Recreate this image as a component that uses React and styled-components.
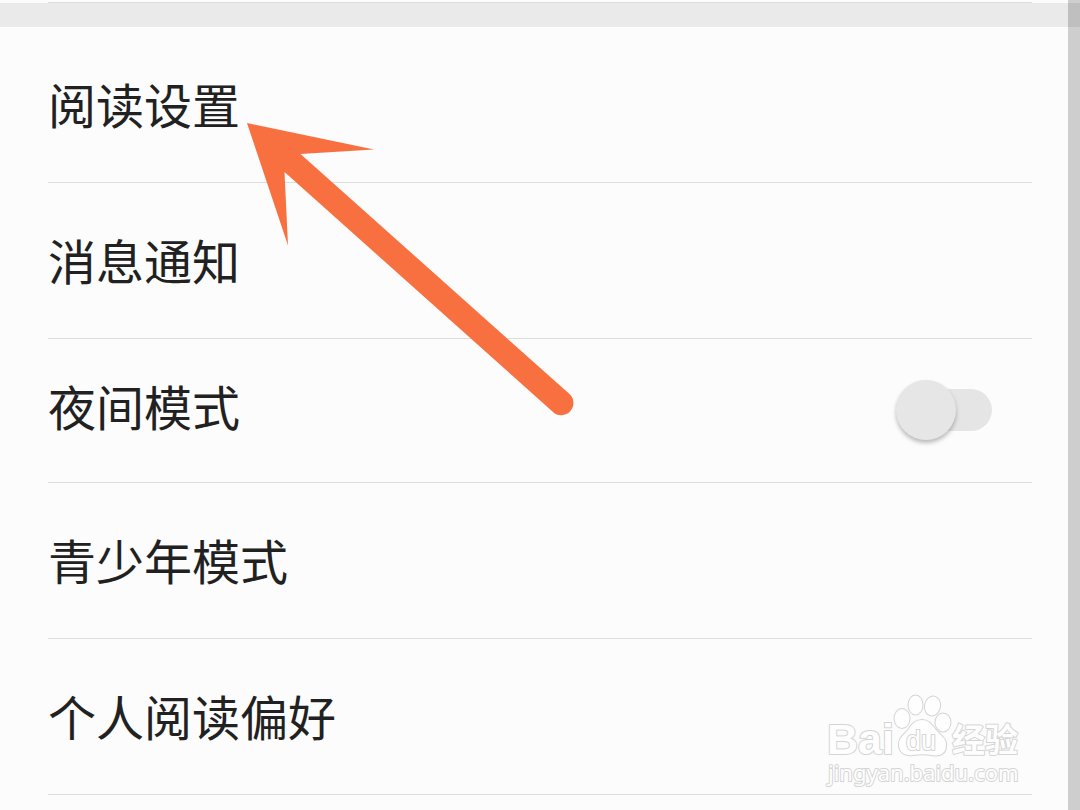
import React from "react";
import styled, { createGlobalStyle } from "styled-components";

const GlobalStyle = createGlobalStyle`
  *, *::before, *::after { box-sizing: border-box; }
  html, body, #root { height: 100%; }
  body {
    margin: 0;
    background: #fcfcfc;
    color: #212121;
    font-family: Roboto, "Noto Sans CJK SC", sans-serif;
    overflow: hidden;
  }
`;

const Page = styled.main`
  position: relative;
  min-height: 100%;
  overflow: hidden;
`;

const TopRule = styled.div`
  height: 1px;
  margin: 2px 48px 0;
  background: #dcdcdc;
`;

const SectionBand = styled.div`
  height: 24px;
  background: #eaeaea;
`;

const List = styled.ul`
  list-style: none;
  margin: 0;
  padding: 0 48px;
`;

const Item = styled.li`
  display: flex;
  height: ${(p) => (p.$compact ? 144 : 156)}px;
  border-bottom: 1px solid #dcdcdc;
`;

const RowButton = styled.button`
  flex: 1;
  padding: 6px 0 0;
  border: 0;
  background: none;
  color: inherit;
  font: inherit;
  font-size: 48px;
  line-height: 72px;
  text-align: left;
  cursor: pointer;
`;

const SwitchRow = styled.label`
  flex: 1;
  display: flex;
  align-items: center;
  justify-content: space-between;
  padding: 0 40px 1px 0;
  font-size: 48px;
  line-height: 72px;
  cursor: pointer;
`;

const Switch = styled.input`
  appearance: none;
  display: flex;
  align-items: center;
  width: 96px;
  height: 60px;
  margin: 0;
  cursor: pointer;

  &::before {
    content: "";
    flex: none;
    width: 60px;
    height: 60px;
    border-radius: 50%;
    background: #e6e6e6;
    box-shadow: 0 3px 4px rgba(0, 0, 0, 0.26);
    z-index: 1;
  }

  &::after {
    content: "";
    flex: none;
    width: 72px;
    height: 42px;
    margin-left: -36px;
    border-radius: 21px;
    background: #e5e5e5;
  }

  &:checked::before {
    margin-left: 36px;
  }

  &:checked::after {
    margin-left: -72px;
  }
`;

const ScrollTrack = styled.div`
  position: absolute;
  inset: 0 0 0 auto;
  width: 12px;
  background: rgba(0, 0, 0, 0.18);
`;

const Arrow = styled.svg`
  position: absolute;
  left: 240px;
  top: 116px;
  width: 340px;
  height: 304px;
  pointer-events: none;
`;

const Watermark = styled.svg`
  position: absolute;
  right: 52px;
  bottom: 18px;
  width: 204px;
  height: 104px;
  pointer-events: none;

  text,
  ellipse,
  path {
    fill: #fefefe;
    stroke: #d4d4d4;
    stroke-width: 2px;
    stroke-linejoin: round;
    paint-order: stroke fill;
  }
`;

export default function App() {
  return (
    <>
      <GlobalStyle />
      <Page>
        <TopRule />
        <SectionBand />
        <List>
          <Item>
            <RowButton type="button">阅读设置</RowButton>
          </Item>
          <Item>
            <RowButton type="button">消息通知</RowButton>
          </Item>
          <Item $compact>
            <SwitchRow htmlFor="night-mode">
              夜间模式
              <Switch id="night-mode" type="checkbox" role="switch" />
            </SwitchRow>
          </Item>
          <Item>
            <RowButton type="button">青少年模式</RowButton>
          </Item>
          <Item>
            <RowButton type="button">个人阅读偏好</RowButton>
          </Item>
        </List>

        <Arrow viewBox="240 116 340 304" aria-hidden="true">
          <path
            fill="#f97040"
            d="M247 123 L374 149.500 L300.500 154 L569.500 394 A12 12 0 0 1 553 412 L284.500 172 L288 245.500 Z"
          />
        </Arrow>

        <Watermark viewBox="824 688 204 104" aria-label="Baidu 经验">
          <text
            x="827"
            y="754"
            fontFamily="'Liberation Sans', sans-serif"
            fontWeight="700"
            fontSize="43"
          >
            Bai
          </text>
          <ellipse cx="902" cy="718.500" rx="7.500" ry="9.500" />
          <ellipse cx="915.500" cy="705" rx="7" ry="9.500" />
          <ellipse cx="932.500" cy="706" rx="7.500" ry="9.500" transform="rotate(12 932.500 706)" />
          <ellipse cx="943" cy="722.500" rx="7.500" ry="9" />
          <path d="M922 720 C915 720 911 725 908 730 C904 735 898 738 899 746 C900 754 907 756 913 755 C919 754 926 754 932 755 C940 757 947 753 946 744 C946 738 940 735 936 730 C932 725 929 720 922 720 Z" />
          <text
            x="906"
            y="750"
            fontFamily="'Liberation Sans', sans-serif"
            fontSize="27"
          >
            du
          </text>
          <text
            x="952"
            y="752"
            fontFamily="'Noto Sans CJK SC', sans-serif"
            fontWeight="700"
            fontSize="33"
          >
            经验
          </text>
          <text
            x="828"
            y="781"
            fontFamily="'Noto Sans', sans-serif"
            fontSize="22"
          >
            jingyan.baidu.com
          </text>
        </Watermark>

        <ScrollTrack />
      </Page>
    </>
  );
}
